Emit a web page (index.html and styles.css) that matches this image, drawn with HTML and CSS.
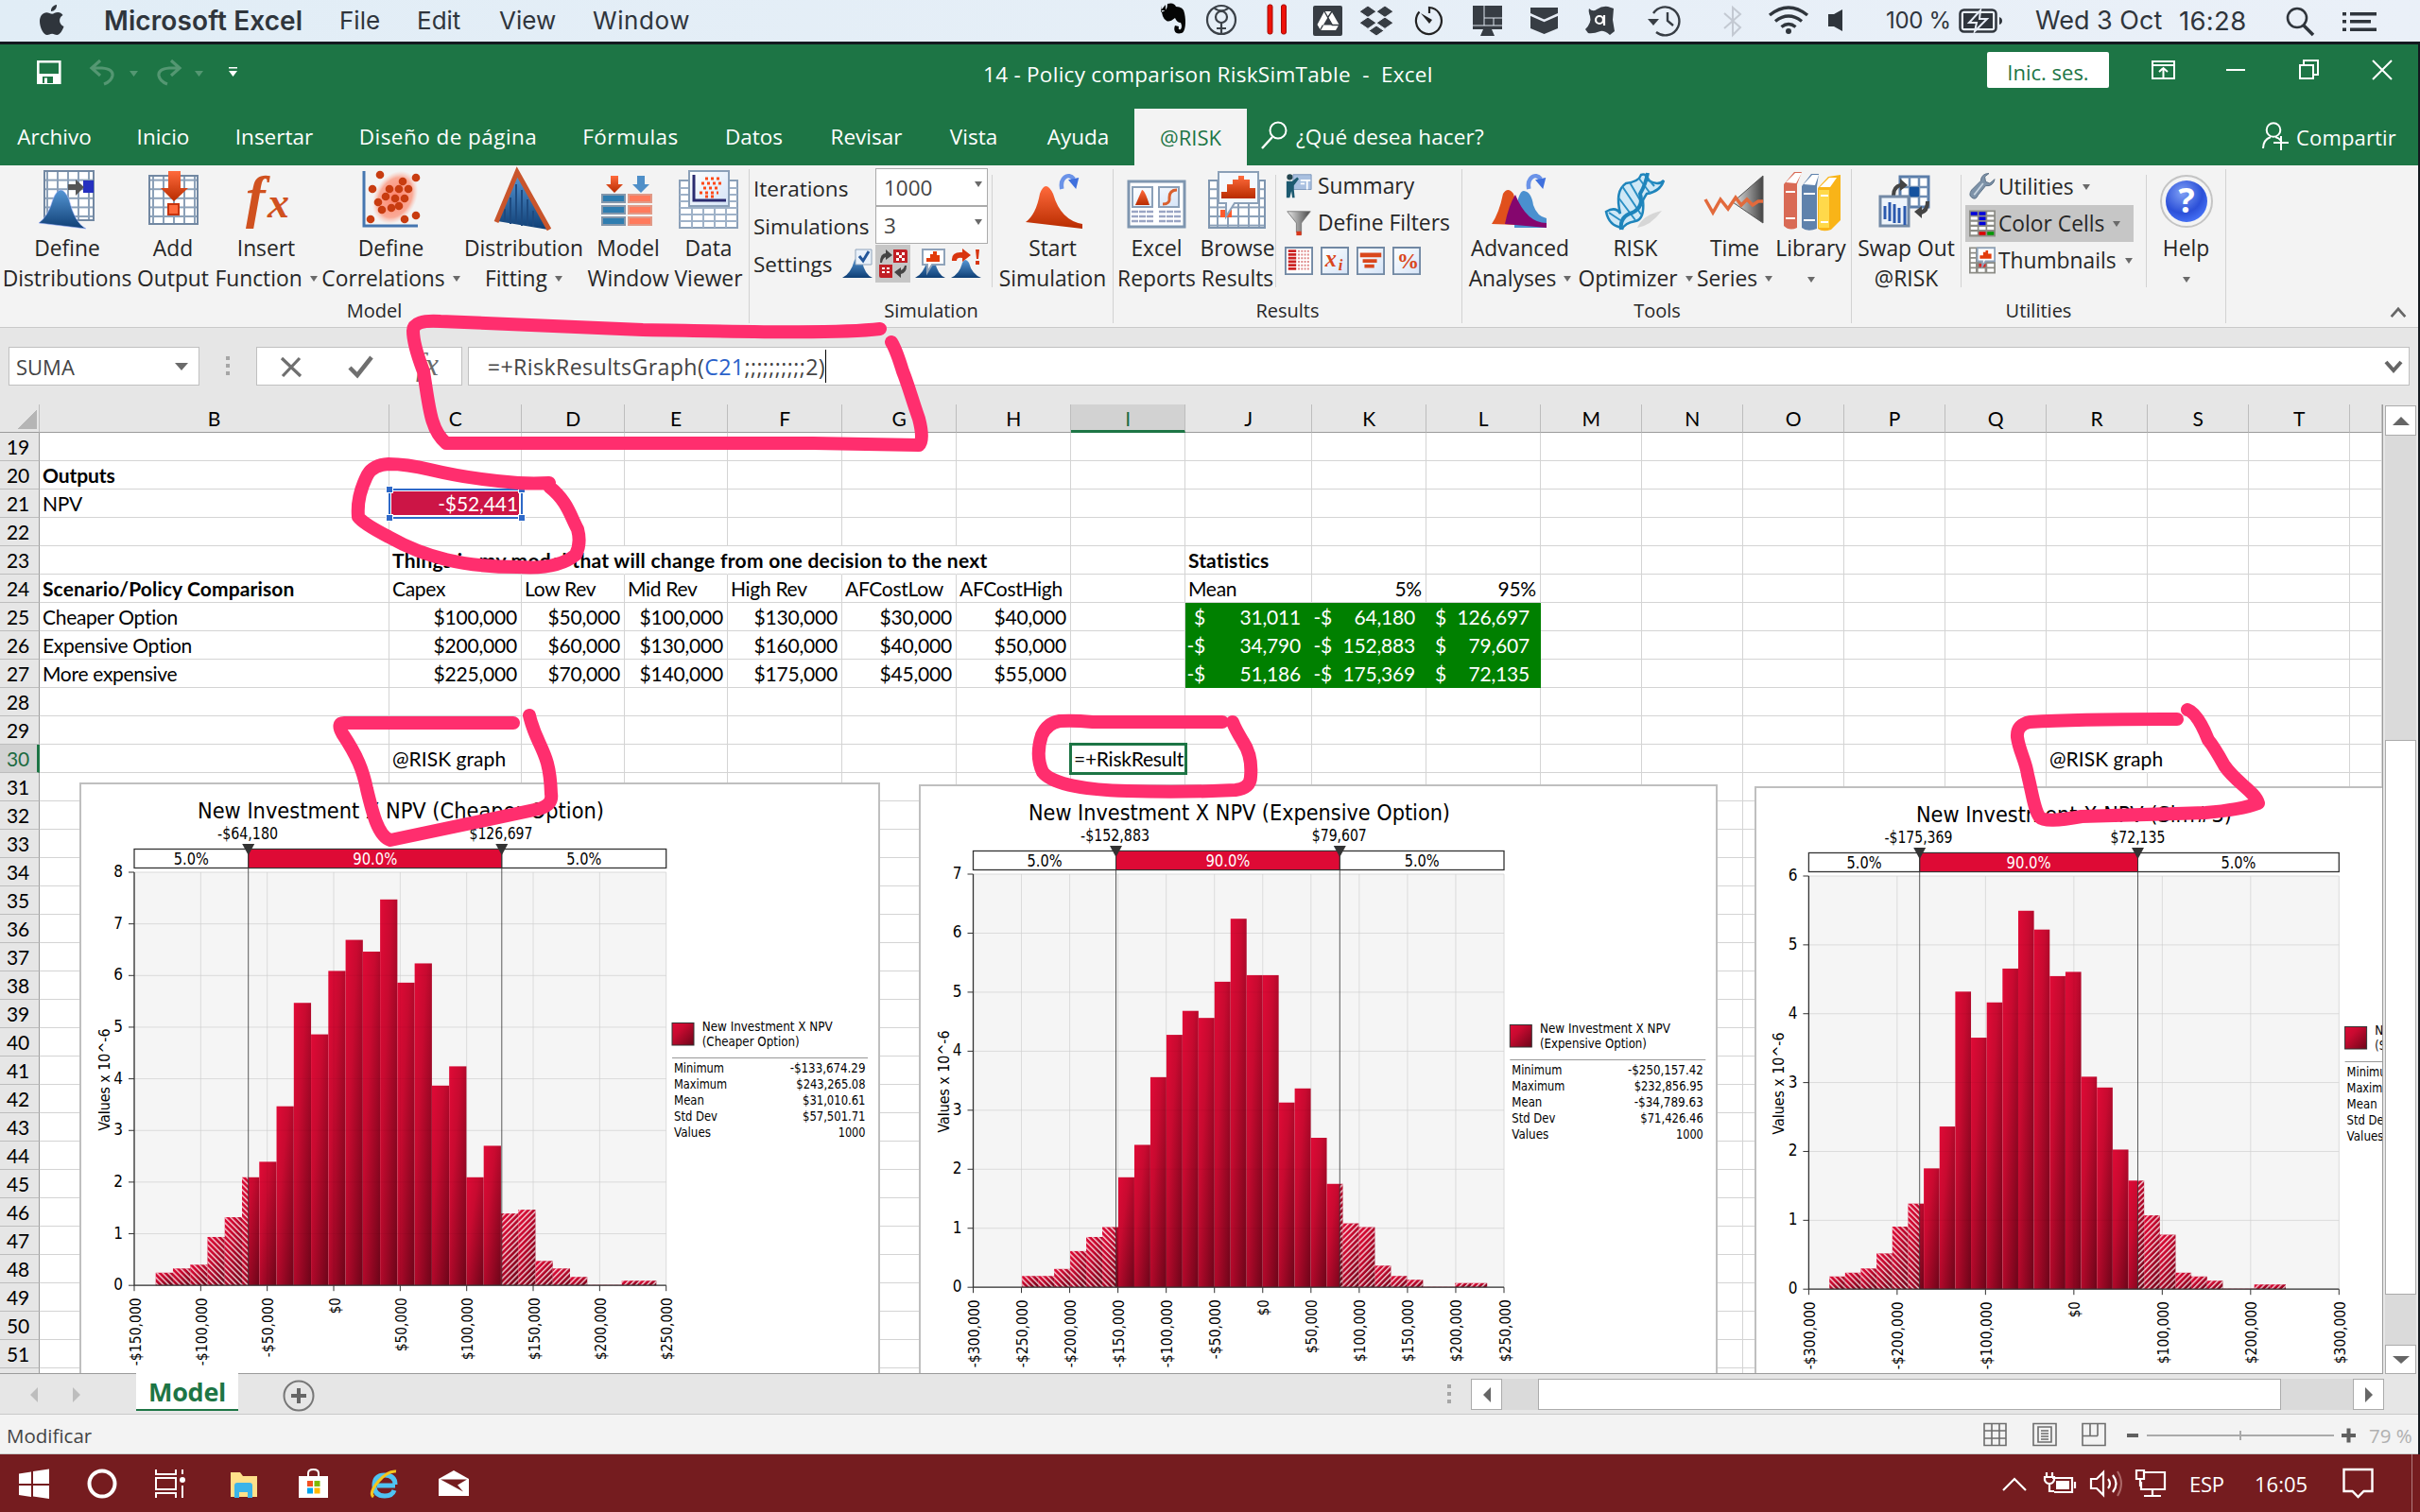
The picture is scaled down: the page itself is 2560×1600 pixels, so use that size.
FILE: index.html
```html
<!DOCTYPE html>
<html lang="es">
<head>
<meta charset="utf-8">
<title>14 - Policy comparison RiskSimTable - Excel</title>
<link rel="stylesheet" href="styles.css">
</head>
<body>
<svg width="0" height="0" class="defs" aria-hidden="true">
  <defs>
    <linearGradient id="gOr" x1="0" y1="0" x2="0" y2="1"><stop offset="0" stop-color="#ff6a3c"/><stop offset="1" stop-color="#b82c00"/></linearGradient>
    <linearGradient id="gBl" x1="0" y1="0" x2="0" y2="1"><stop offset="0" stop-color="#5596d4"/><stop offset="1" stop-color="#0f3f75"/></linearGradient>
    <linearGradient id="gGr" x1="0" y1="0" x2="1" y2="0"><stop offset="0" stop-color="#e8e8e8"/><stop offset="1" stop-color="#444"/></linearGradient>
    <linearGradient id="gCell" x1="0" y1="0" x2="1" y2="1"><stop offset="0" stop-color="#fff"/><stop offset="1" stop-color="#d5e4f7"/></linearGradient>
    <linearGradient id="gBar" x1="0" y1="0" x2="1" y2="1"><stop offset="0" stop-color="#e00a36"/><stop offset=".35" stop-color="#c80a30"/><stop offset="1" stop-color="#6c0519"/></linearGradient>
    <radialGradient id="gBall" cx=".4" cy=".3" r=".8"><stop offset="0" stop-color="#7fa0f5"/><stop offset=".6" stop-color="#2c50d8"/><stop offset="1" stop-color="#4f7dff"/></radialGradient>
    <radialGradient id="gGlow"><stop offset="0" stop-color="#ff5a3a" stop-opacity=".75"/><stop offset=".75" stop-color="#ff7a5a" stop-opacity=".6"/><stop offset="1" stop-color="#ffb09a" stop-opacity="0"/></radialGradient>
    <pattern id="grid" width="11" height="9.6" patternUnits="userSpaceOnUse"><rect width="11" height="9.6" fill="#8ba0b8"/><rect x="1" y="1" width="9" height="7.6" fill="#fff"/></pattern>
    <pattern id="hatchL" width="4.2" height="4.2" patternUnits="userSpaceOnUse" patternTransform="rotate(-45)"><rect width="1.5" height="4.2" fill="#fff" fill-opacity=".75"/></pattern>
    <pattern id="hatchR" width="4.2" height="4.2" patternUnits="userSpaceOnUse" patternTransform="rotate(45)"><rect width="1.5" height="4.2" fill="#fff" fill-opacity=".75"/></pattern>
    <symbol id="again" viewBox="0 0 28 28"><path d="M3 24C0 8 12 0 20 10" fill="none" stroke="#6b93e8" stroke-width="6"/><path d="M12 11l15-3-4 16z" fill="#3f70dd"/></symbol>
  </defs>
</svg>

<header class="menubar">
  <svg class="apple" viewBox="0 0 26 32"><path d="M18 0c.3 4-2.600 7-6 7-.4-3.500 2.600-6.600 6-7zM24.500 11c-5 3-4.300 9.500 1 12-1.500 4.500-4.300 9-7.300 9-2 0-2.700-1.300-5.100-1.300S9.700 32 8 32C4 32 0 24 0 17.500 0 12 3.400 8.300 7.300 8.300c2.400 0 4 1.500 5.800 1.500 1.700 0 3.300-1.700 6.200-1.700 2 0 4 1.100 5.200 2.900z" fill="#2f353c"/></svg>
  <b class="m-app">Microsoft Excel</b><span class="m-file">File</span><span class="m-edit">Edit</span><span class="m-view">View</span><span class="m-win">Window</span>
  <svg class="tray" viewBox="1220 0 740 44">
    <path d="M1227 13q7-1 7-9 7-2 9 3 8 0 9 7c2 9 1 20-3 21-7 2-9-3-7-8l4 1q-1 4 2 3 2-3 0-7-4 0-6-5-6 5-9 3-5-2-6-16z" fill="#050505"/><path d="M1227 11l5-6v6z" fill="#050505"/>
    <g fill="none" stroke="#3b4148" stroke-width="2.200"><circle cx="1291" cy="21" r="15"/><circle cx="1291" cy="18" r="6"/><path d="M1283 8q8 7 16 0M1291 24v11M1286 30h10"/></g>
    <g fill="#ee1208" stroke="#a50b05"><rect x="1340" y="5" width="5" height="31" rx="2"/><rect x="1354.500" y="5" width="5" height="31" rx="2"/></g>
    <rect x="1388" y="6" width="31" height="32" rx="2" fill="#373d44"/><path d="M1400 12h7.500l8 14-3.500 6h-16l-3.500-6z" fill="#fff"/><path d="M1403.800 18l5 8.500h-10z" fill="#373d44"/><path d="M1400 12l8.300 14.500h7.500M1408 12l-4 6M1398.500 26.500l-3 5.500" stroke="#373d44" stroke-width="1.400" fill="none"/>
    <path d="M1446 6l9 6.200-9 6.200-9-6.200zM1464 6l9 6.200-9 6.200-9-6.200zM1446 18l9 6.200-9 6.200-9-6.200zM1464 18l9 6.200-9 6.200-9-6.200zM1455 27l8 5.500-8 5.500-8-5.500z" fill="#373d44" stroke="#e8eef7"/>
    <path d="M1511 14V8a13.500 14 0 1 1-10.500 4.500" fill="none" stroke="#222" stroke-width="2.200"/><path d="M1502 14l12 7-3 4z" fill="#222"/>
    <path d="M1557 6h31v25h-11l3 7h-15l3-7h-11z" fill="#373d44"/><path d="M1569 6v21M1569 19h19M1579 19v8M1557 27h31" stroke="#dfe6ee" fill="none" stroke-width="1"/>
    <path d="M1618 8h29v22l-14.500 6-14.500-6z" fill="#373d44"/><path d="M1617 15l15.500 7 15.500-7" stroke="#e8eef7" stroke-width="2.500" fill="none"/>
    <path d="M1680 9q4 4 8 1 6-4 12-3l6 2-1 12 2 12-5 4q-6-5-10-4-8 3-13 2l-3-4q7-7 5-14-2-5-1-8z" fill="#373d44"/><circle cx="1691" cy="21" r="4" fill="none" stroke="#fff" stroke-width="2.200"/><path d="M1696 16v11" stroke="#fff" stroke-width="2.200"/>
    <path d="M1748 14a15 15 0 1 1 3 20M1763 13v9l6 5" fill="none" stroke="#373d44" stroke-width="2.400"/><path d="M1742 20h12l-6 7z" fill="#373d44"/>
    <path d="M1823 14l17 15-8 8V8l8 7-17 15" fill="none" stroke="#c3c9d2" stroke-width="2"/>
    <g fill="none" stroke="#2f353c" stroke-width="3.400"><path d="M1871 16q20-16 40 0M1877 22.500q14-11 28 0M1883.500 28.500q7.500-6 15 0"/></g><circle cx="1891" cy="33" r="3" fill="#2f353c"/>
    <path d="M1933 15h6l9-5v23l-9-5h-6z" fill="#2f353c"/>
  </svg>
  <span class="m-pct">100&nbsp;%</span>
  <svg class="batt" viewBox="0 0 46 26"><rect x="1.500" y="1.500" width="38" height="23" rx="4" fill="none" stroke="#2f353c" stroke-width="2.500"/><rect x="5" y="5" width="31" height="16" fill="#2f353c"/><path d="M43 9v8q3-1 3-4t-3-4z" fill="#2f353c"/><path d="M23 2l-12 13h8l-2 9 13-13h-8z" fill="#2f353c" stroke="#e8eef7" stroke-width="2"/></svg>
  <span class="m-date">Wed 3 Oct</span><span class="m-time">16:28</span>
  <svg class="m-ico" viewBox="0 0 96 32"><circle cx="12" cy="13" r="10" fill="none" stroke="#2f353c" stroke-width="2.600"/><path d="M19 21l10 10" stroke="#2f353c" stroke-width="3.500"/><g fill="#2f353c"><path d="M60 7h4v3.600h-4zM68 7h28v3.600H68zM60 15h4v3.600h-4zM68 15h22v3.600H68zM60 23.500h4v3.600h-4zM68 23.500h28v3.600H68z"/></g></svg>
</header>

<div class="window">
  <div class="titlebar">
    <svg class="qat" viewBox="0 0 230 30">
      <path d="M1.300 2.300h23v22.500h-23z" fill="none" stroke="#fff" stroke-width="2.600"/><path d="M0 15h25v11H0z" fill="#fff"/><path d="M6 18h11v7H6z" fill="#1d7545"/><path d="M8 19.500h3v5.500H8z" fill="#fff"/>
      <g fill="none" stroke="#549772" stroke-width="3.200"><path d="M67 1l-9 8 9 8M58 9h11q12 1 11 8-1 6-9 9"/><path d="M142 1l9 8-9 8M151 9h-11q-12 1-11 8 1 6 9 9"/></g>
      <path d="M98 12h9l-4.500 6zM167 12h9l-4.500 6z" fill="#549772"/><path d="M203 8h9v1.500h-9zM203 12h9l-4.500 6z" fill="#fff"/>
    </svg>
    <div class="title">14 - Policy comparison RiskSimTable&nbsp; -&nbsp; Excel</div>
    <div class="signin">Inic. ses.</div>
    <svg class="wctl" viewBox="0 0 256 24"><g fill="none" stroke="#fff" stroke-width="2"><path d="M1 3h23v18H1zM1 7h23M12.500 20v-10M8 14l4.500-4 4.500 4"/><path d="M79 12h20"/><path d="M157 7h14v14h-14zM161 6V2h15v15h-4"/><path d="M234 2l20 20M254 2l-20 20"/></g></svg>
  </div>
  <nav class="tabs">
    <span class="first">Archivo</span><span>Inicio</span><span>Insertar</span><span class="lng">Diseño de página</span><span class="lng">Fórmulas</span><span>Datos</span><span>Revisar</span><span>Vista</span><span>Ayuda</span><span class="active">@RISK</span>
    <svg class="tell" viewBox="0 0 28 30"><circle cx="18" cy="10" r="8.500" fill="none" stroke="#fff" stroke-width="2"/><path d="M12 17L1 29" stroke="#fff" stroke-width="2.400"/></svg>
    <em>¿Qué desea hacer?</em>
    <svg class="share" viewBox="0 0 28 30"><g fill="none" stroke="#fff" stroke-width="2"><circle cx="12" cy="8.500" r="7.300"/><path d="M1 28q0-9 8-12M14 16q4 1 6 4M20 15v15M12 22h16"/></g></svg>
    <em class="comp">Compartir</em>
  </nav>

  <section class="ribbon">
    <div class="group g-model">
      <div class="body">
        <div class="btn" style="width:142px"><svg viewBox="0 0 64 64"><path d="M8 0h52v52H8z" fill="url(#grid)" stroke="#7288a2" stroke-width="2"/><path d="M49 10h11v13H49z" fill="#2530c0"/><path d="M33 14h8V9l9 8-9 9v-6h-8z" fill="#555"/><path d="M2 55Q12 48 17 30q8-20 17 0 6 25 18 31z" fill="url(#gBl)" stroke="#9fb4ff" stroke-width=".6"/></svg><p>Define<br>Distributions</p></div>
        <div class="btn" style="width:82px"><svg viewBox="0 0 64 64"><path d="M7 5h51v51H7z" fill="url(#grid)" stroke="#7288a2" stroke-width="2"/><path d="M27 0h13v18h8L33 32 19 18h8z" fill="url(#gOr)"/><path d="M27 35h11v11H27z" fill="#ff6a3c" stroke="#c8330a" stroke-width="2"/></svg><p>Add<br>Output</p></div>
        <div class="btn" style="width:115px"><svg viewBox="0 0 64 64"><text x="10" y="48" class="fx">f</text><text x="33" y="49" class="fx small">x</text></svg><p>Insert<br>Function <i class="dd"></i></p></div>
        <div class="btn" style="width:149px"><svg viewBox="0 0 64 64"><path d="M3 0v58h57" fill="none" stroke="#4576b0" stroke-width="3"/><ellipse cx="36" cy="28" rx="22" ry="30" transform="rotate(30 36 28)" fill="url(#gGlow)"/><g fill="#c83c10"><circle cx="20" cy="4" r="4.300"/><circle cx="58" cy="7" r="4.300"/><circle cx="12" cy="19" r="4.300"/><circle cx="30" cy="19" r="4.300"/><circle cx="40" cy="19" r="4.300"/><circle cx="50" cy="19" r="4.300"/><circle cx="44" cy="11" r="4.300"/><circle cx="26" cy="27" r="4.300"/><circle cx="36" cy="29" r="4.300"/><circle cx="46" cy="29" r="4.300"/><circle cx="18" cy="33" r="4.300"/><circle cx="22" cy="41" r="4.300"/><circle cx="32" cy="39" r="4.300"/><circle cx="40" cy="37" r="4.300"/><circle cx="10" cy="51" r="4.300"/><circle cx="46" cy="51" r="4.300"/><circle cx="58" cy="47" r="4.300"/></g></svg><p>Define<br>Correlations <i class="dd"></i></p></div>
        <div class="btn" style="width:132px"><svg viewBox="0 0 64 64"><path d="M4 53L26 4l32 58z" fill="url(#gBl)"/><path d="M12 40v14M18 28v28M24 14v42M30 20v38M36 30v28M42 42v17" stroke="#1d4a80" stroke-width="2"/><path d="M3 54L25 1l34 61" fill="none" stroke="#c9552c" stroke-width="5"/></svg><p>Distribution<br>Fitting <i class="dd"></i></p></div>
        <div class="btn" style="width:89px"><svg viewBox="0 0 64 64"><path d="M13 5h8v9h5l-9 9-9-9h5z" fill="url(#gOr)"/><path d="M41 5h8v9h5l-9 9-9-9h5z" fill="#4f8fc8"/><g fill="#2f7db0" stroke="#8497ab" stroke-width="2"><path d="M4 25h24v8H4zM4 37h24v8H4zM4 49h24v8H4z"/></g><g fill="#ff7a5c" stroke="#e09a88" stroke-width="2"><path d="M32 25h24v8H32zM32 37h24v8H32zM32 49h24v8H32z"/></g></svg><p>Model<br>Window</p></div>
        <div class="btn" style="width:81px"><svg viewBox="0 0 64 64"><path d="M1 10h61v50H1z" fill="#fff" stroke="#8ba0b8" stroke-width="2"/><path d="M1 18h61M1 25h61M1 32h61M1 39h61M1 46h61M1 53h61M14 40v20M26 40v20M38 40v20M50 40v20" stroke="#9fb2c8" stroke-width="2"/><path d="M11 0h42v37H11z" fill="url(#gCell)" stroke="#8ba0b8" stroke-width="2"/><path d="M16 4v27h34" fill="none" stroke="#2b2c70" stroke-width="3"/><g stroke="#ff4a18" stroke-width="3" stroke-dasharray="3 3"><path d="M28 8h16M24 13h22M26 18h18M22 23h20M28 27h10"/></g></svg><p>Data<br>Viewer</p></div>
      </div>
      <div class="name">Model</div>
    </div>

    <div class="group g-sim">
      <div class="body">
        <div class="fields">
          <div class="row"><label>Iterations</label><span class="combo">1000<i class="dd"></i></span></div>
          <div class="row"><label>Simulations</label><span class="combo">3<i class="dd"></i></span></div>
          <div class="row set"><label>Settings</label>
            <svg viewBox="0 0 32 32"><path d="M0 31Q9 27 13 12q4-6 8 2 3 14 11 17z" fill="url(#gBl)"/><path d="M14 1h17v16H14z" fill="#e9f1fa" stroke="#8fa3ba"/><path d="M18 8l4 5 6-10" fill="none" stroke="#23569a" stroke-width="3"/></svg>
            <span class="on"><svg viewBox="0 0 32 32"><path d="M16 1h13q2 0 2 2v12H16zM1 17h14v14H3q-2 0-2-2z" fill="#c11f25"/><g fill="#fff"><path d="M19 4h3v3h-3zM25 4h3v3h-3zM22 7h3v3h-3zM19 10h3v3h-3zM25 10h3v3h-3zM4 20h3v2H4zM9 20h3v2H9zM4 24h3v2H4zM9 24h3v2H9z"/></g><path d="M2 15Q2 5 8 5V1l7 6-7 5V9q-3 1-4 6zM30 18q0 8-6 9v4l-7-6 7-5v3q3-1 4-5z" fill="#444"/></svg></span>
            <svg viewBox="0 0 32 32"><path d="M0 31Q9 27 13 12q4-6 8 2 3 14 11 17z" fill="url(#gBl)"/><path d="M8 1h23v16H18l-5 8v-8H8z" fill="#fff" stroke="#8fa3ba" stroke-width="2"/><path d="M12 14v-4h4V6h3V3h4v4h3v7z" fill="#e23c0c"/></svg>
            <svg viewBox="0 0 32 32"><path d="M0 31Q9 27 12 15q3-6 7 0 3 12 13 16z" fill="url(#gBl)"/><path d="M1 13Q0 3 12 4V0l9 7-9 7V10q-6-1-6 3z" fill="#d8350f"/><path d="M26 1h4l-1 10h-2zM26 13h4v4h-4z" fill="#d8350f"/></svg>
          </div>
        </div>
        <div class="sep"></div>
        <div class="btn" style="width:127px"><svg viewBox="0 0 64 64"><path d="M3 54Q14 46 18 24q6-16 14 0 8 28 31 32v5z" fill="url(#gOr)"/><use href="#again" x="35" y="1" width="29" height="21"/></svg><p>Start<br>Simulation</p></div>
      </div>
      <div class="name">Simulation</div>
    </div>

    <div class="group g-res">
      <div class="body">
        <div class="btn" style="width:91px"><svg viewBox="0 0 64 64"><path d="M2 11h59v48H2z" fill="#fff" stroke="#7f96b0" stroke-width="3"/><path d="M6 17h21v21H6zM34 17h21v21H34z" fill="url(#gCell)" stroke="#8ba0b8" stroke-width="2"/><path d="M9 36l7-16q3 0 8 16z" fill="url(#gOr)"/><path d="M38 35q8 0 7-7 0-8 8-8" fill="none" stroke="#d9602f" stroke-width="3"/><path d="M5 43h24M5 48h24M5 53h24M34 43h23M34 48h23M34 53h23" stroke="#9aa5c4" stroke-width="2.500" stroke-dasharray="7 1"/></svg><p>Excel<br>Reports</p></div>
        <div class="btn" style="width:80px"><svg viewBox="0 0 64 64"><path d="M2 10h59v50H2z" fill="url(#grid)" stroke="#7f96b0" stroke-width="2"/><path d="M14 41h12v8H14z" fill="#ff5a2c"/><path d="M12 1h42v33H29l-9 14V34h-8z" fill="#f4f8fd" stroke="#8ba0b8" stroke-width="2"/><path d="M15 29v-7h6v-8h6V9h6V5h6v4h6v9h6v11z" fill="url(#gOr)"/></svg><p>Browse<br>Results</p></div>
        <div class="sep"></div>
        <div class="stack rs">
          <div><svg viewBox="0 0 32 32"><path d="M9 2h22v18H9z" fill="#a9c0e0" stroke="#7994b8"/><path d="M18 9h12M18 13h5M26 9v11" stroke="#fff" stroke-width="2"/><circle cx="5" cy="5" r="3.500" fill="#23454e"/><path d="M1 10h7l6-5 2 2-6 8v5l1 10H8l-1-8-2 8H1z" fill="#1d5a70"/></svg>Summary</div>
          <div><svg viewBox="0 0 32 32"><path d="M2 2h28L19 16v14l-6-3V16z" fill="url(#gGr)" stroke="#777"/><path d="M13 26h6v5h-6z" fill="#d9371a"/></svg>Define Filters</div>
          <div class="mini">
            <svg viewBox="0 0 32 32"><path d="M1 1h30v30H1z" fill="#fff" stroke="#7188a3" stroke-width="2"/><path d="M4 5h9M4 9h9M4 13h9M4 17h9M4 21h9M4 25h9" stroke="#c22" stroke-width="3"/><path d="M15 5h13M15 9h13M15 13h13M15 17h13M15 21h13M15 25h13" stroke="#d88" stroke-width="2" stroke-dasharray="2 1.500"/></svg>
            <svg viewBox="0 0 32 32"><path d="M1 1h30v30H1z" fill="url(#gCell)" stroke="#7188a3" stroke-width="2"/><text x="5" y="22" class="xi">x</text><text x="20" y="27" class="xi s">i</text></svg>
            <svg viewBox="0 0 32 32"><path d="M1 1h30v30H1z" fill="url(#gCell)" stroke="#7188a3" stroke-width="2"/><path d="M4 7h24v5H4zM7 14h16v4H7zM9 20h11v4H9z" fill="#d9471c"/></svg>
            <svg viewBox="0 0 32 32"><path d="M1 1h30v30H1z" fill="url(#gCell)" stroke="#7188a3" stroke-width="2"/><text x="5" y="25" class="pc">%</text></svg>
          </div>
        </div>
      </div>
      <div class="name">Results</div>
    </div>

    <div class="group g-tools">
      <div class="body">
        <div class="btn" style="width:120px"><svg viewBox="0 0 64 64"><path d="M26 50q4-30 10-29 8 1 10 15 4 12 14 14v10H26z" fill="#4a90cf"/><path d="M2 56Q10 44 14 24q5-8 11 0 5 14 5 33z" fill="#e0501c"/><path d="M16 56q4-20 11-31 12 30 33 30v5z" fill="#85066e"/><use href="#again" x="36" y="1" width="27" height="21"/></svg><p>Advanced<br>Analyses <i class="dd"></i></p></div>
        <div class="btn" style="width:124px"><svg viewBox="0 0 64 64"><path d="M34 60q14-2 26-18-20 4-26 18z" fill="#d6d6d6"/><path d="M1 43q10-6 15 2-6-24 6-32 14-2 16-9 6-2 8 6 10 6 16 0-4 12-18 14-2 3-4 7 2 20-8 22-12 2-14 9V60Q4 58 1 43z" fill="#cfe8f6" stroke="#1e84bb" stroke-width="2.500"/><path d="M18 16l20 30M14 28l18 24M26 12l14 24M36 8l12 16M42 4l10 12M4 44l12 8" stroke="#2a8fc4" stroke-width="2"/><path d="M17 62q-2-14 12-18 12-6 8-20 6-10 8-22" fill="none" stroke="#1e84bb" stroke-width="4"/></svg><p>RISK<br>Optimizer <i class="dd"></i></p></div>
        <div class="btn" style="width:86px"><svg viewBox="0 0 64 64"><path d="M62 5v50L30 33z" fill="url(#gGr)" stroke="#555"/><path d="M1 30l8 14 8-14 8 10 8-12 6 8 6-6 6 6 6-4h5" fill="none" stroke="#e26a3c" stroke-width="3.500"/></svg><p>Time<br>Series <i class="dd"></i></p></div>
        <div class="btn" style="width:75px"><svg viewBox="0 0 64 64"><path d="M3 14L14 1h8L17 14v46q-8 4-14-2z" fill="#d96a55"/><path d="M22 16L32 3h8L38 16v45q-10 4-16-1z" fill="#5f82ac"/><path d="M39 18L50 6l13-2v48l-10 10q-9 3-14-1z" fill="#f9b418"/><path d="M40 20h11v40H40z" fill="#ffd94a"/><path d="M5 12L15 2h7l-6 11zM24 14L33 4h7l-4 11zM41 17L51 7h8l-7 10z" fill="#fff"/><path d="M5 22h10M5 50h10M24 24h12M24 52h12M42 26h8M42 54h8" stroke="#fff" stroke-width="2"/></svg><p>Library<br><i class="dd solo"></i></p></div>
      </div>
      <div class="name">Tools</div>
    </div>

    <div class="group g-util">
      <div class="body">
        <div class="btn" style="width:115px"><svg viewBox="0 0 64 64"><path d="M25 6h30v32H25z" fill="#fff" stroke="#5a7da9" stroke-width="3"/><path d="M35 6v32M45 6v32M25 17h30M25 27h30" stroke="#6e8db3" stroke-width="2.500"/><path d="M35 17h10v10H35z" fill="#14529f"/><path d="M16 26q0-11 9-13V8l8 7-8 6v-4q-5 2-5 10zM56 32q0 12-8 14v4l-8-7 8-6v4q4-2 4-9z" fill="#444"/><path d="M4 27h30v31H4z" fill="#eef4fb" stroke="#7389a5" stroke-width="3"/><path d="M9 37v14M14 33v20M19 35v20M24 39v16M30 37v20" stroke="#2b59ae" stroke-width="3"/></svg><p>Swap Out<br>@RISK</p></div>
        <div class="sep"></div>
        <div class="stack ut">
          <div><svg viewBox="0 0 32 32"><path d="M31 7l-6 5-5-2-1-6 5-4q-9 0-10 9L3 20q-4 6 0 9 5 4 8-3l9-11q9 1 11-8z" fill="#7d92a8" stroke="#566a80"/><path d="M17 12L6 26" stroke="#c9d6e2" stroke-width="2"/></svg>Utilities<i class="dd"></i></div>
          <div class="hl"><svg viewBox="0 0 32 32"><path d="M0 0h32v32H0z" fill="#8c8c86"/><path d="M2 8h8v3.500H2zM22 2h8v3.500h-8zM22 8h8v3.500h-8zM2 14h8v3.500H2zM22 14h8v3.500h-8zM2 20h8v3.500H2zM12 20h8v3.500h-8zM22 20h8v3.500h-8zM2 26h8v3.500H2z" fill="#fff"/><path d="M2 2h8v4H2zM12 2h8v4h-8zM12 8h8v4h-8zM12 14h8v4h-8z" fill="#00d"/><path d="M12 26h8v4h-8z" fill="#d00"/><path d="M22 26h8v4h-8z" fill="#090"/></svg>Color Cells<i class="dd"></i></div>
          <div><svg viewBox="0 0 32 32"><path d="M0 0h32v32H0z" fill="#8c8c86"/><path d="M2 2h6v4H2zM2 8h6v4H2zM2 14h6v4H2zM2 20h6v4H2zM2 26h6v4H2zM11 26h8v4h-8zM22 26h8v4h-8zM22 20h8v4h-8z" fill="#fff"/><path d="M12 20h8v4h-8z" fill="#d22"/><path d="M10 1h21v16H20l-4 6v-6h-6z" fill="#fff" stroke="#8fa3ba" stroke-width="2"/><path d="M13 14v-4h4V6h3V4h3v4h4v6z" fill="#e23c0c"/></svg>Thumbnails<i class="dd wide"></i></div>
        </div>
        <div class="sep"></div>
        <div class="btn" style="width:83px"><svg viewBox="0 0 64 64"><circle cx="32" cy="32" r="27" fill="#f4f4f4" stroke="#c4c4c4" stroke-width="2"/><circle cx="32" cy="32" r="22" fill="url(#gBall)"/><text x="32" y="44" class="q">?</text></svg><p>Help<br><i class="dd solo"></i></p></div>
      </div>
      <div class="name">Utilities</div>
    </div>
    <svg class="collapse" viewBox="0 0 18 12"><path d="M1 11l8-9 8 9" fill="none" stroke="#666" stroke-width="3"/></svg>
  </section>

  <section class="formula">
    <div class="box namebox">SUMA<i class="dd big"></i></div>
    <div class="dots"><i></i><i></i><i></i></div>
    <div class="box acts"><svg viewBox="0 0 180 30"><path d="M2 6l20 19M21 6L3 25" stroke="#6f6f6f" stroke-width="3.200"/><path d="M74 16l8 8L97 5" fill="none" stroke="#6f6f6f" stroke-width="4.500"/><text x="144" y="24" class="fxs">fx</text></svg></div>
    <div class="box input"><span>=+RiskResultsGraph(<b>C21</b>;;;;;;;;;;2)</span><i class="caret"></i><svg viewBox="0 0 18 12"><path d="M1 1l8 9 8-9" fill="none" stroke="#666" stroke-width="4"/></svg></div>
  </section>

  <section class="work">
    <div class="sheet" id="sheet"><div class="cells" id="cells"></div></div>
    <div class="vscroll"><div class="sb up"><i></i></div><div class="track t1"></div><div class="thumb"></div><div class="track t2"></div><div class="sb down"><i></i></div></div>
  </section>

  <section class="sheettabs">
    <svg class="nav" viewBox="0 0 54 18"><path d="M8 1v16L0 9zM45 1v16l8-8z" fill="#bdbdbd"/></svg>
    <div class="tab">Model</div>
    <svg class="plus" viewBox="0 0 34 34"><circle cx="17" cy="17" r="15.500" fill="none" stroke="#777" stroke-width="2"/><path d="M17 9v16M9 17h16" stroke="#666" stroke-width="4"/></svg>
    <div class="dots h"><i></i><i></i><i></i></div>
    <div class="hscroll"><div class="sb left"><i></i></div><div class="track"></div><div class="thumb"></div><div class="track r"></div><div class="sb right"><i></i></div></div>
  </section>

  <section class="status">
    <span>Modificar</span>
    <svg viewBox="2090 0 410 42"><g fill="none" stroke="#6d6d6d" stroke-width="1.600"><path d="M2099 9.500h23v23h-23zM2107 9.500v23M2115 9.500v23M2099 17h23M2099 25h23"/><path d="M2151 9.500h24v23h-24zM2156 13h14v16h-14zM2159 17h8M2159 20h8M2159 23h8M2159 26h8"/><path d="M2203 9.500h24v23h-24zM2211 9.500v13M2219 9.500v13M2203 22.500h16"/></g><path d="M2250 20h12v4h-12zM2477 20h15v4h-15zM2482.500 14.500h4v15h-4z" fill="#606060"/><path d="M2271 21h198v2h-198zM2369 17h2v10h-2z" fill="#aaa"/></svg>
    <em>79 %</em>
  </section>

  <footer class="taskbar">
    <svg class="tb-l" viewBox="0 1539 520 61">
      <path d="M20 1559.500l13-2v12.500H20zM35 1557l17-2.500v15.500H35zM20 1572h13v12l-13-2zM35 1572h17v14l-17-2.500z" fill="#fff"/>
      <circle cx="108" cy="1570" r="13.500" fill="none" stroke="#fff" stroke-width="4"/>
      <g fill="none" stroke="#fff" stroke-width="2"><path d="M165 1555v5h21v-5M165 1585v-5h21v5M165 1564h21v12h-21zM193 1555v5M193 1572v13"/></g><circle cx="193" cy="1566" r="3" fill="#fff"/>
      <path d="M244 1558h10l3 4h15v22h-28z" fill="#ffe08a"/><path d="M248 1572q0-3 3-3h13q3 0 3 3v13h-5v-6h-9v6h-5z" fill="#3cb4ea"/>
      <path d="M316 1562h31v23h-31z" fill="#fff"/><path d="M326 1562v-3q0-4 5.500-4t5.500 4v3" fill="none" stroke="#fff" stroke-width="2"/><path d="M325 1567h6v6h-6z" fill="#f25022"/><path d="M332.500 1567h6v6h-6z" fill="#7fba00"/><path d="M325 1574.500h6v6h-6z" fill="#00a4ef"/><path d="M332.500 1574.500h6v6h-6z" fill="#ffb900"/>
      <path d="M399 1572h19M418 1571q0-10-11-10t-11 11 11 11q8 0 10-6" fill="none" stroke="#4fc3f2" stroke-width="5"/><path d="M395 1584q-5-4 5-16t19-11" fill="none" stroke="#f5c61d" stroke-width="3"/>
      <path d="M464 1565l16-9 16 9v18h-32z" fill="#fff"/><path d="M466 1565.500h28l-10 6 6 7z" fill="#751c1f"/>
    </svg>
    <svg class="tb-r" viewBox="2110 1539 190 61"><g fill="none" stroke="#fff" stroke-width="2.200"><path d="M2119 1577l12-12 12 12"/><path d="M2171 1564h21v15h-19M2195 1568v7"/><path d="M2165 1558v4M2171 1558v4M2163 1563h10v3q-1 4-5 4t-5-4zM2168 1570v8h5"/><path d="M2212 1565h6l7-7v24l-7-7h-6zM2230 1565q4 5 0 10M2235 1561q7 9 0 18"/><path d="M2268 1558h22v18h-25v-8M2277 1576v7M2268 1583h18M2260 1556h8v9h-8zM2264 1565v8"/></g><path d="M2240 1557q8 13 0 26" fill="none" stroke="#a66" stroke-width="2"/><path d="M2175 1567h14v9h-14z" fill="#fff"/></svg>
    <span class="esp">ESP</span><span class="clk">16:05</span>
    <svg class="act" viewBox="0 0 34 34"><path d="M1.500 2h30v23h-9l-6 6-6-6h-9z" fill="none" stroke="#fff" stroke-width="2.400"/></svg>
    <i class="peek"></i>
  </footer>
</div>

<svg class="ink" viewBox="0 0 2560 1600">
  <path d="M931 348C880 354 760 350 680 349L466 340Q437 338 437 350C437 365 445 385 448 393C454 430 455 455 472 469C560 470 700 468 860 469L972 471Q978 466 972 443C964 420 960 405 955 393Q948 370 943 362"/>
  <path d="M581 511Q565 512 548 511C510 508 480 503 455 497Q430 491 411 491Q395 492 389 502Q377 525 379 547Q384 554 411 568C450 590 490 600 548 600Q590 603 609 587Q615 575 611 560C603 545 600 530 581 515"/>
  <path d="M543 765H364Q356 765 362 776C378 800 384 815 388 835C394 860 400 885 413 889L570 856Q585 852 583 840C582 810 577 800 570 785Q563 770 560 757"/>
  <path d="M1293 764H1156Q1135 762 1121 763Q1108 765 1102 778Q1095 800 1103 817C1113 830 1150 836 1193 837Q1250 839 1307 836Q1323 834 1323 822Q1325 800 1315 785Q1306 770 1304 764"/>
  <path d="M2303 761C2250 761 2200 761 2147 764Q2133 767 2134 780C2136 795 2143 805 2145 820C2150 840 2152 858 2158 865Q2164 871 2202 864L2333 860Q2370 857 2389 850C2386 838 2365 828 2353 810Q2342 790 2336 783Q2325 755 2314 751"/>
</svg>
<script src="app.js"></script>
</body>
</html>
```
FILE: styles.css
```css
* { box-sizing: border-box; }
body { margin: 0; width: 2560px; height: 1600px; overflow: hidden; display: flex; flex-direction: column; position: relative; background: #14191f; font-family: "Open Sans", "Noto Sans", sans-serif; font-size: 22px; color: #262626; }
svg { display: block; flex: none; overflow: visible; }
p { margin: 0; }
em { font-style: normal; }
.defs { position: absolute; }

.menubar { height: 44px; flex: none; display: flex; align-items: center; background: linear-gradient(90deg, #e1edf6, #eaf0f8); font: 500 28px/44px Inter, sans-serif; color: #2f353c; white-space: nowrap; padding-left: 42px; }
.menubar b { font-weight: 600; letter-spacing: .1px; }
.menubar .apple { width: 26px; height: 32px; margin: -3px 42px 0 0; }
.m-app { width: 249px; }
.m-file { width: 82px; }
.m-edit { width: 87px; }
.m-view { width: 99px; }
.menubar > span { font-weight: 400; font-size: 26px; }
.menubar > .m-win { letter-spacing: .6px; }
.tray { width: 740px; height: 44px; margin-left: auto; }
.menubar > .m-pct { width: 77px; margin-left: 34px; font-size: 24px; letter-spacing: -.3px; }
.batt { width: 46px; height: 26px; }
.menubar > .m-date { width: 152px; margin-left: 35px; font-size: 27px; }
.menubar > .m-time { width: 113px; font-size: 27.500px; letter-spacing: .3px; }
.m-ico { width: 96px; height: 32px; margin-right: 46px; }

.window { margin-top: 3px; height: 1553px; width: 2558px; display: flex; flex-direction: column; background: #e6e6e6; }
.titlebar { height: 68px; background: #1d7545; color: #fff; display: flex; align-items: flex-start; }
.qat { width: 230px; height: 30px; margin: 16px 0 0 39px; }
.title { margin: 15px 0 0 771px; width: 1062px; line-height: 34px; font-size: 22.500px; letter-spacing: .28px; }
.signin { width: 129px; height: 38px; margin-top: 8px; background: #fff; color: #1d7545; text-align: center; line-height: 42px; border-radius: 2px; font-size: 22px; }
.wctl { width: 256px; height: 24px; margin: 15px 0 0 45px; }
.tabs { height: 60px; background: #1d7545; color: #fff; display: grid; grid-template-columns: 120px 105px 130px 238px 148px 113px 125px 102px 119px 119px 52px 1022px 36px 1fr; align-items: center; line-height: 60px; }
.tabs span { text-align: center; font-size: 22.500px; white-space: nowrap; }
.tabs em { font-size: 22.500px; letter-spacing: .15px; }
.tabs .comp { font-size: 22px; }
.tabs .lng { letter-spacing: .45px; }
.tabs .first { padding-right: 5px; }
.tabs .active { background: #f3f3f3; color: #1d7545; height: 60px; font-size: 22px; }
.tell { width: 28px; height: 30px; margin: -4px 0 0 15px; }
.share { width: 28px; height: 30px; margin-top: -3px; }

.ribbon { height: 172px; background: #f3f3f3; border-bottom: 1px solid #c9c9c9; display: flex; position: relative; }
.group { display: flex; flex-direction: column; position: relative; border-right: 1px solid #d2d2d2; margin: 4px 0 3px; height: 163px; }
.g-model { width: 793px; } .g-sim { width: 385px; } .g-res { width: 369px; } .g-tools { width: 412px; padding-left: 1px; } .g-util { width: 396px; }
.body { display: flex; height: 137px; }
.name { text-align: center; font-size: 20px; line-height: 26px; height: 26px; margin-top: 2px; }
.btn { padding-top: 2px; text-align: center; white-space: nowrap; flex: none; line-height: 32px; font-size: 22.800px; }
.btn svg { width: 64px; height: 64px; margin: 0 auto 2px; }
.btn p { margin: 0 -10px; }
.dd { display: inline-block; border: 4.500px solid transparent; border-top: 6px solid #6a6a6a; border-bottom: 0; vertical-align: 5px; margin-left: 2px; }
.dd.solo { margin: 0; vertical-align: 4px; }
.sep { width: 1px; height: 119px; background: #d2d2d2; margin-top: 6px; flex: none; }
.fx { font: italic bold 62px "Liberation Serif", serif; fill: #d0511f; }
.fx.small { font-size: 46px; }
.xi { font: italic bold 26px "Liberation Serif", serif; fill: #d9471c; }
.xi.s { font-size: 18px; }
.pc { font: bold 25px "Liberation Serif", serif; fill: #d9471c; }
.q { font: bold 36px "Open Sans", sans-serif; fill: #fff; text-anchor: middle; }
.fields { width: 256px; padding-left: 4px; }
.row { display: flex; height: 40px; align-items: center; font-size: 22.500px; }
.row label { width: 129px; }
.combo { width: 119px; height: 40px; margin-top: -2px; border: 1.500px solid #ababab; background: #fff; padding: 0 5px 0 8px; display: flex; align-items: center; justify-content: space-between; color: #444; }
.combo .dd { vertical-align: 0; margin: -6px 0 0; }
.row.set svg { width: 32px; height: 32px; margin-right: 6px; }
.row.set label { width: 94px; }
.row.set .on { background: #c6c6c6; width: 37px; height: 40px; padding: 4px 0 0 3px; margin: 0 5px 0 -3px; }
.stack { padding: 0 0 0 8px; font-size: 22.800px; white-space: nowrap; margin-top: -2px; }
.stack > div { display: flex; align-items: center; height: 39px; }
.stack svg { width: 32px; height: 28px; margin-right: 4px; }
.stack .mini svg { width: 32px; height: 30px; margin-right: 6px; }
.stack .mini { height: 41px; }
.stack.ut { width: 195px; padding: 0 0 0 4px; margin-top: -1px; }
.stack.ut > div { padding-left: 4px; width: 178px; }
.stack.ut svg { width: 28px; height: 31px; margin-right: 3px; }
.stack.ut .hl { background: #c6c6c6; }
.stack.ut .dd { margin-left: 9px; }
.collapse { position: absolute; left: 2528px; top: 150px; width: 18px; height: 11px; }

.formula { height: 81px; display: flex; padding: 20px 9px 0; color: #444; }
.box { height: 41px; background: #fff; border: 1px solid #c0c0c0; display: flex; align-items: center; }
.namebox { width: 202px; padding: 0 11px 0 7px; justify-content: space-between; }
.dd.big { border-width: 8px 7px 0; }
.dots { width: 60px; padding: 10px 0 0 28px; }
.dots i { display: block; width: 4px; height: 4px; background: #a6a6a6; margin-bottom: 4px; }
.acts { width: 218px; }
.acts svg { width: 180px; height: 30px; margin-left: 24px; }
.fxs { font: italic 33px "Liberation Serif", serif; fill: #6a6a6a; }
.input { width: 2055px; margin-left: 6px; padding: 0 7px 0 20px; font-size: 23.200px; }
.input span { letter-spacing: .38px; }
.input b { font-weight: 400; color: #2a61c9; }
.caret { width: 1px; height: 35px; background: #000; }
.input svg { width: 18px; height: 12px; margin-left: auto; }

.work { height: 1026px; display: flex; }
.sheet { width: 2521px; position: relative; overflow: hidden; border-right: 1px solid #9b9b9b; border-bottom: 1px solid #9b9b9b; background: #fff; }
.cells { display: grid; grid-template-columns: 42px 370px 140px 109px 109px 121px 121px 121px 121px 134px 121px 121px repeat(8, 107px) 34px; grid-template-rows: 30px repeat(34, 30px); font: 21px/30px Lato, sans-serif; color: #000; }
.cells > div { border-right: 1px solid #d4d4d4; border-bottom: 1px solid #d4d4d4; height: 30px; white-space: nowrap; padding: 0 3px; letter-spacing: -.3px; line-height: 29px; }
.cells > .ch { background: #e6e6e6; text-align: center; border-bottom-color: #9b9b9b; border-right-color: #bdbdbd; padding: 0; }
.cells > .ch.sel { background: #d2d2d2; color: #1d6b42; border-bottom: 3px solid #1d7545; }
.cells > .rh { background: #e6e6e6; border-right-color: #9b9b9b; border-bottom-color: #bdbdbd; padding: 0 0 0 7px; letter-spacing: -.3px; }
.cells > .rh.sel { background: #d2d2d2; color: #1d6b42; border-right: 3px solid #1d7545; }
.cells > .corner { background: linear-gradient(135deg, transparent 58%, #b5b5b5 58%) 14px 3px / 25px 23px no-repeat #e6e6e6; }
.cells > .r { text-align: right; padding-right: 4px; letter-spacing: -.2px; }
.cells > .b { font-weight: 700; letter-spacing: -.1px; }
.cells > .b.w1 { letter-spacing: .12px; }
.cells > .b.w2 { letter-spacing: .27px; }
.cells > .gr { letter-spacing: .05px; }
.cells > .open { border-right-color: transparent; }
.cells > .acc { background: #008000; color: #fff; border-color: #008000; display: flex; justify-content: space-between; padding: 0 11px 0 0; letter-spacing: -.2px; }
.acc span { width: 21px; text-align: right; }
.cells > .npv { background: #cc1546; color: #fff; outline: 2.500px solid #2e69c8; outline-offset: -1px; text-align: right; position: relative; box-shadow: inset 0 0 0 2px #fff; border-color: #cc1546; letter-spacing: -.1px; }
.npv i { position: absolute; width: 6px; height: 6px; background: #2e69c8; outline: 1px solid #fff; }
.npv i:nth-of-type(1) { left: -3px; top: -3px; } .npv i:nth-of-type(2) { right: -4px; top: -3px; }
.npv i:nth-of-type(3) { left: -3px; bottom: -4px; } .npv i:nth-of-type(4) { right: -4px; bottom: -4px; }
.cells > .edit { outline: 3px solid #1d7545; outline-offset: -1px; position: relative; z-index: 1; overflow: hidden; padding-left: 3px; background: #fff; letter-spacing: -.25px; }
.chart { position: absolute; overflow: visible; font-family: "DejaVu Sans Condensed", "DejaVu Sans", sans-serif; }
.c1 { left: 84px; top: 400px; width: 848px; height: 640px; }
.c2 { left: 972px; top: 402px; width: 845px; height: 640px; }
.c3 { left: 1856px; top: 404px; width: 848px; height: 640px; }

.vscroll { width: 33px; margin-left: 2px; }
.sb { background: #fff; border: 1px solid #ababab; display: flex; align-items: center; justify-content: center; flex: none; }
.vscroll .sb { height: 32px; margin-top: 1px; }
.vscroll .down { height: 31px; margin: 0; }
.sb i { border: 9px solid transparent; }
.up i { border-bottom: 9px solid #666; border-top: 0; }
.down i { border-top: 8px solid #666; border-bottom: 0; }
.left i { border: 8px solid transparent; border-right-color: #666; border-left: 0; }
.right i { border: 8px solid transparent; border-left-color: #666; border-right: 0; }
.track { background: #dadada; }
.t1 { height: 322px; }
.vscroll .thumb { height: 587px; background: #fff; border: 1px solid #ababab; }
.t2 { height: 53px; }

.sheettabs { height: 43px; display: flex; border-bottom: 1px solid #c9c9c9; }
.nav { width: 54px; height: 18px; margin: 13px 0 0 32px; }
.sheettabs .tab { width: 108px; height: 40px; margin: -1px 0 0 58px; background: #fff; border-bottom: 2px solid #1d7545; color: #1d7545; font-weight: 700; font-size: 27px; line-height: 40px; text-align: center; position: relative; letter-spacing: -.3px; }
.plus { width: 34px; height: 34px; margin: 6px 0 0 47px; }
.dots.h { margin-left: 1198px; width: 25px; padding: 11px 0 0 0; }
.hscroll { display: flex; margin: 5px 0 0 0; height: 33px; }
.hscroll .sb { width: 33px; }
.hscroll .track { width: 38px; } .hscroll .thumb { width: 786px; background: #fff; border: 1px solid #ababab; } .hscroll .track.r { width: 76px; }

.status { height: 42px; display: flex; background: #f3f3f3; color: #444; font-size: 20.500px; line-height: 45px; padding-left: 7px; border-bottom: 1px solid #ccc; }
.status svg { width: 410px; height: 42px; margin-left: auto; }
.status em { width: 44px; margin: 0 8px 0 6px; color: #b0b0b0; white-space: nowrap; }

.taskbar { height: 61px; background: #751c1f; color: #fff; display: flex; align-items: center; width: 2560px; }
.tb-l { width: 520px; height: 61px; }
.tb-r { width: 190px; height: 61px; margin-left: 1590px; }
.esp { width: 69px; margin-left: 16px; letter-spacing: -.3px; }
.clk { width: 93px; }
.act { width: 34px; height: 34px; }
.peek { width: 1px; height: 61px; background: #b07c7e; margin-left: 39px; }

.ink { position: absolute; left: 0; top: 0; width: 2560px; height: 1600px; pointer-events: none; }
.ink path { fill: none; stroke: #ff2e6e; stroke-width: 14px; stroke-linecap: round; stroke-linejoin: round; }
```
FILE: app.js
```js
// Sheet contents, keyed by cell: [text, classes]
const data = {
  B20: ['Outputs', 'b'], B21: ['NPV', ''], C21: ['-$52,441', 'npv'],
  C23: ['Things in my model that will change from one decision to the next', 'b w2 open'],
  J23: ['Statistics', 'b w1'], B24: ['Scenario/Policy Comparison', 'b w1'],
  C24: ['Capex', ''], D24: ['Low Rev', ''], E24: ['Mid Rev', ''], F24: ['High Rev', ''],
  G24: ['AFCostLow', ''], H24: ['AFCostHigh', ''], J24: ['Mean', ''], K24: ['5%', 'r'], L24: ['95%', 'r'],
  C30: ['@RISK graph', 'gr'], I30: ['=+RiskResults', 'edit'], R30: ['@RISK graph', 'gr open']
};
const table = [
  ['Cheaper Option', '100,000', '50,000', '100,000', '130,000', '30,000', '40,000', ['$', '31,011'], ['-$', '64,180'], ['$', '126,697']],
  ['Expensive Option', '200,000', '60,000', '130,000', '160,000', '40,000', '50,000', ['-$', '34,790'], ['-$', '152,883'], ['$', '79,607']],
  ['More expensive', '225,000', '70,000', '140,000', '175,000', '45,000', '55,000', ['-$', '51,186'], ['-$', '175,369'], ['$', '72,135']]
];
table.forEach((row, i) => {
  const n = 25 + i;
  data['B' + n] = [row[0], ''];
  'CDEFGH'.split('').forEach((c, k) => { data[c + n] = ['$' + row[k + 1], 'r']; });
  'JKL'.split('').forEach((c, k) => { data[c + n] = ['<span>' + row[k + 7][0] + '</span>' + row[k + 7][1], 'acc']; });
});
['D', 'E', 'F', 'G'].forEach(c => { data[c + '23'] = ['', 'open']; });

const cols = 'BCDEFGHIJKLMNOPQRST'.split('').concat('U');
let html = '<div class="ch corner"></div>' + cols.map(c => `<div class="ch${c === 'I' ? ' sel' : ''}">${c === 'U' ? '' : c}</div>`).join('');
for (let r = 19; r < 52; r++) {
  html += `<div class="rh${r === 30 ? ' sel' : ''}">${r}</div>`;
  for (const c of cols) {
    const d = data[c + r];
    html += d ? `<div class="${d[1]}">${d[0]}${d[1] === 'npv' ? '<i></i><i></i><i></i><i></i>' : ''}</div>` : '<div></div>';
  }
}
html += '<div class="rh"></div>' + cols.map(() => '<div></div>').join('');
document.getElementById('cells').innerHTML = html;

// Histograms with delimiter bar, axes and legend
const charts = [
  { cls: 'c1', vb: '84 828 848 640', box: [85, 829, 845], px: [142, 704.7], py: [923, 1360.2], max: 8, x0: 164.7, x1: 694.3,
    bars: [27, 36, 44, 103, 145, 230, 263, 381, 601, 534, 669, 735, 710, 821, 644, 685, 425, 466, 230, 297, 153, 161, 52, 36, 18, 1, 1, 10, 10], k: 2.0103,
    dl: [262.7, 530.8], title: ['New Investment X NPV (Cheaper Option)', 209, 430], lab: [['-$64,180', 230, 64], ['$126,697', 496.5, 67]],
    ticks: ['-$150,000', '-$100,000', '-$50,000', '$0', '$50,000', '$100,000', '$150,000', '$200,000', '$250,000'],
    lg: 711, opt: ['(Cheaper Option)', 103], st: ['-$133,674.29', '$243,265.08', '$31,010.61', '$57,501.71', '1000'] },
  { cls: 'c2', vb: '972 830 845 640', box: [973, 831, 843], px: [1029.5, 1591], py: [925, 1362.2], max: 7, x0: 1081.2, x1: 1573.2,
    bars: [24, 24, 39, 77, 107, 128, 234, 303, 447, 537, 588, 573, 650, 784, 664, 664, 393, 423, 318, 220, 136, 128, 46, 24, 16, 1, 1, 9, 9], k: 2.0103,
    dl: [1180.5, 1417.3], title: ['New Investment X NPV (Expensive Option)', 1088, 446], lab: [['-$152,883', 1143, 73], ['$79,607', 1387.8, 58]],
    ticks: ['-$300,000', '-$250,000', '-$200,000', '-$150,000', '-$100,000', '-$50,000', '$0', '$50,000', '$100,000', '$150,000', '$200,000', '$250,000'],
    lg: 1597.3, opt: ['(Expensive Option)', 113], st: ['-$250,157.42', '$232,856.95', '-$34,789.63', '$71,426.46', '1000'] },
  { cls: 'c3', vb: '1856 832 848 640', box: [1857, 833, 845], px: [1913.4, 2474.3], py: [927, 1364.2], max: 6, x0: 1935.2, x1: 2418,
    bars: [27, 35, 44, 76, 133, 182, 257, 346, 633, 535, 610, 682, 805, 765, 666, 675, 452, 429, 297, 231, 157, 116, 35, 27, 18, 1, 1, 10, 10], k: 2.0103,
    dl: [2030.7, 2261.5], title: ['New Investment X NPV (Sim#3)', 2026.9, 334], lab: [['-$175,369', 1993.4, 72], ['$72,135', 2232.4, 58]],
    ticks: ['-$300,000', '-$200,000', '-$100,000', '$0', '$100,000', '$200,000', '$300,000'],
    lg: 2480.6, opt: ['(Sim#3)', 46], st: [] }
];
const text = (x, y, s, size, w, extra = '') =>
  `<text x="${x}" y="${y}" font-size="${size}" ${w ? `textLength="${w}" lengthAdjust="spacingAndGlyphs"` : ''} ${extra}>${s}</text>`;

charts.forEach(c => {
  const [l, r] = c.px, [t, b] = c.py, [d1, d2] = c.dl, n = c.bars.length, bw = (c.x1 - c.x0) / n;
  let s = `<rect x="${c.box[0]}" y="${c.box[1]}" width="${c.box[2]}" height="700" fill="#fff" stroke="#bfbfbf" stroke-width="2"/>`;
  s += `<rect x="${l}" y="${t}" width="${r - l}" height="${b - t}" fill="#f5f5f5"/>`;
  let grid = '';
  c.ticks.forEach((_, i) => { const x = l + (r - l) * i / (c.ticks.length - 1); grid += `M${x} ${t}V${b}`; });
  for (let i = 0; i <= c.max; i++) grid += `M${l} ${b - (b - t) * i / c.max}H${r}`;
  s += `<path d="${grid}" stroke="#e4e4e4"/>`;
  c.bars.forEach((h, i) => {
    const x = c.x0 + i * bw, hh = h / c.k, y = b - hh;
    s += `<rect x="${x}" y="${y}" width="${bw}" height="${hh}" fill="url(#gBar)"/>`;
    const tail = (a, z, id) => { if (z > a) s += `<rect x="${a}" y="${y}" width="${z - a}" height="${hh}" fill="url(#${id})"/>`; };
    tail(x, Math.min(x + bw, d1), 'hatchL');
    tail(Math.max(x, d2), x + bw, 'hatchR');
  });
  s += `<path d="${grid}" stroke="#000" stroke-opacity=".04"/>`;
  s += text(c.title[1], t - 57, c.title[0], 23, c.title[2]);
  c.lab.forEach(a => { s += text(a[1], t - 35, a[0], 17, a[2]); });
  s += `<rect x="${l}" y="${t - 24.5}" width="${r - l}" height="20" fill="#fff" stroke="#333" stroke-width="1.3"/>`;
  s += `<rect x="${d1}" y="${t - 24.5}" width="${d2 - d1}" height="20" fill="#de0a35" stroke="#333" stroke-width="1"/>`;
  const mid = 'text-anchor="middle"';
  s += text((l + d1) / 2, t - 8, '5.0%', 17, 37, mid) + text((d1 + d2) / 2, t - 8, '90.0%', 17, 47, mid + ' fill="#fff"') + text((d2 + r) / 2, t - 8, '5.0%', 17, 37, mid);
  s += `<path d="M${d1} ${t - 24}V${b}M${d2} ${t - 24}V${b}" stroke="#333" stroke-opacity=".8"/>`;
  [d1, d2].forEach(x => { s += `<path d="M${x - 6.5} ${t - 30}h13l-6.5 12z" fill="#333"/>`; });
  s += `<path d="M${l} ${t}V${b}H${r}" fill="none" stroke="#333" stroke-width="1.3"/>`;
  for (let i = 0; i <= c.max; i++) {
    const y = b - (b - t) * i / c.max;
    s += `<path d="M${l - 6} ${y}h6" stroke="#333"/>` + text(l - 12, y + 5, i, 17, 0, 'text-anchor="end"');
  }
  c.ticks.forEach((v, i) => {
    const x = l + (r - l) * i / (c.ticks.length - 1);
    const w = { 9: 72, 8: 66, 7: 57, 2: 17 }[v.length] - (v.length === 8 && v[0] === '-' ? 3 : 0);
    s += `<path d="M${x} ${b}v6" stroke="#333"/>` + text(0, 0, v, 16.5, w, `text-anchor="end" transform="translate(${x + 6.5} ${b + 13}) rotate(-90)"`);
  });
  s += text(0, 0, 'Values x 10^-6', 16, 108, `transform="translate(${l - 26} ${t + 273.5}) rotate(-90)"`);
  const g = c.lg;
  s += `<rect x="${g}" y="${t + 159.5}" width="23" height="23.5" fill="url(#gBar)" stroke="#333"/>`;
  s += text(g + 31.7, t + 168, 'New Investment X NPV', 14.5, 138) + text(g + 31.7, t + 184, c.opt[0], 14.5, c.opt[1]);
  s += `<path d="M${g} ${t + 196.5}h207" stroke="#999"/>`;
  ['Minimum', 'Maximum', 'Mean', 'Std Dev', 'Values'].forEach((k, i) => {
    const y = t + 211.5 + i * 17.05;
    s += text(g + 2, y, k, 14.5, [53, 56, 32, 46, 39][i]);
    if (c.st[i]) s += text(g + 204.5, y, c.st[i], 14.5, c.st[i].length * (i === 4 ? 7.2 : 6.65), 'text-anchor="end"');
  });
  document.getElementById('sheet').insertAdjacentHTML('beforeend', `<svg class="chart ${c.cls}" viewBox="${c.vb}">${s}</svg>`);
});
```
